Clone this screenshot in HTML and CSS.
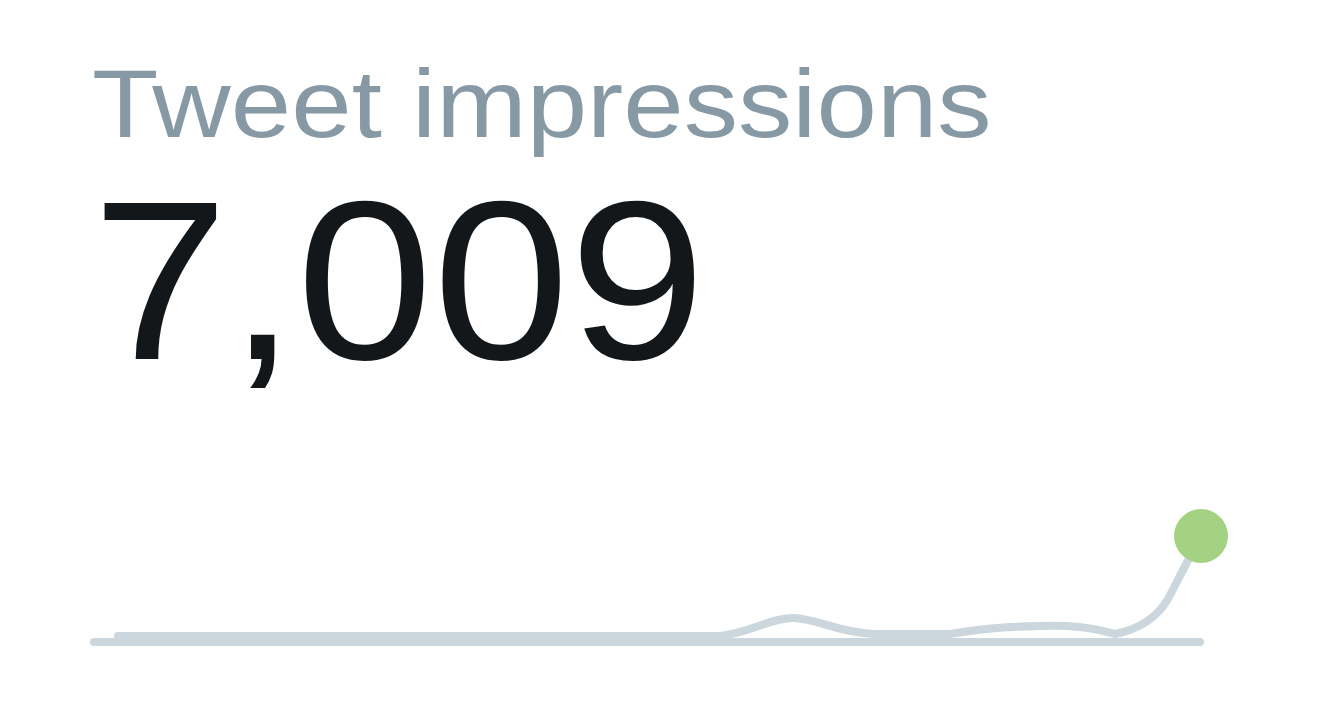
FILE: index.html
```html
<!DOCTYPE html>
<html>
<head>
<meta charset="utf-8">
<link rel="stylesheet" href="styles.css">
</head>
<body>
<div class="card">
  <div class="label">Tweet impressions</div>
  <div class="value">7,009</div>
  <svg class="spark" width="1180" height="180" viewBox="80 500 1180 180">
    <line x1="94" y1="641" x2="1200" y2="641" stroke="#ccd6dd" stroke-width="8" stroke-linecap="round"/>
    <path d="M118 635 L720 635 C750 632 770 617 793 617 C815 617 840 632 875 633 L950 633 C980 628 1000 626 1040 625 C1070 624 1090 626 1115 633 C1140 628 1158 615 1168 598 C1180 575 1190 555 1201 535" fill="none" stroke="#ccd6dd" stroke-width="8" stroke-linecap="round" stroke-linejoin="round"/>
    <circle cx="1201" cy="535" r="27" fill="#a3d382"/>
  </svg>
</div>
</body>
</html>
```

FILE: styles.css
```css
html, body {
  margin: 0;
  padding: 0;
  background: #ffffff;
}
.card {
  padding: 55px 0 0 92px;
  font-family: "Liberation Sans", Arial, sans-serif;
}
.label {
  width: max-content;
  font-size: 97px;
  line-height: 1;
  color: #8899a6;
  transform: scaleX(1.12);
  transform-origin: left top;
  white-space: nowrap;
}
.value {
  width: max-content;
  margin-top: 16px;
  font-size: 226px;
  line-height: 1;
  color: #14171a;
  transform: scaleX(1.085);
  transform-origin: left top;
  white-space: nowrap;
}
.spark {
  display: block;
  margin-left: -12px;
  margin-top: 107px;
}
```
